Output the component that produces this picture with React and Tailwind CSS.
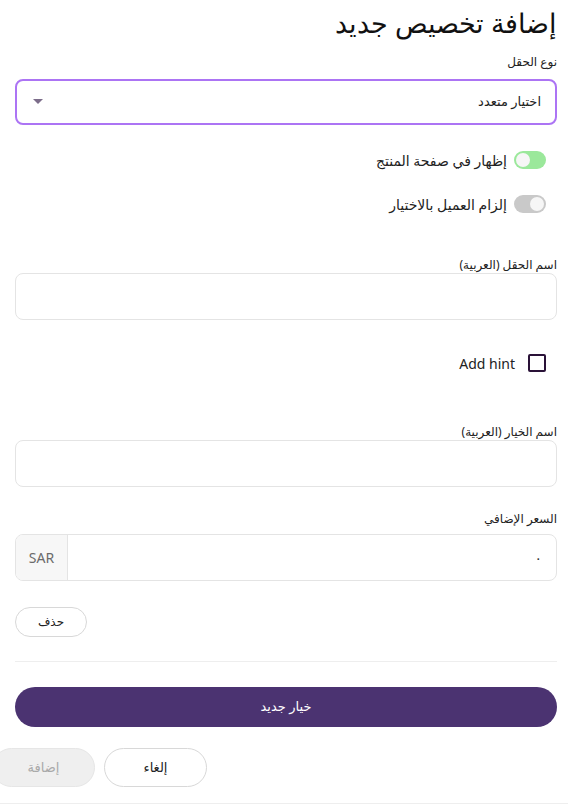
import React from "react";

const font = { fontFamily: '"Noto Sans", "DejaVu Sans", sans-serif' };

function Toggle({ on }) {
  return (
    <div
      className={`w-[32px] h-[18px] rounded-full flex items-center px-[2px] ${
        on ? "bg-[#9be89b] justify-end" : "bg-[#c9c9c9] justify-start"
      }`}
    >
      <div className="w-[14px] h-[14px] rounded-full bg-[#f6f6f6]" />
    </div>
  );
}

export default function App() {
  return (
    <div dir="rtl" className="w-[568px] h-[805px] bg-white overflow-hidden text-[#222]" style={font}>
      <div className="pl-[15px] pr-[11px] flex flex-col">
        <div className="h-[50px] pb-[4px] flex items-center text-[27px] font-light text-[#111]">إضافة تخصيص جديد</div>
        <div className="h-[24px] flex items-center text-[12px] text-[#222]">نوع الحقل</div>
        <div className="mt-[5px] h-[46px] border-2 border-[#ac74f4] rounded-[8px] flex items-center justify-between pr-[14px] pl-[16px]">
          <span className="text-[13px] text-[#222]">اختيار متعدد</span>
          <svg width="10" height="6" viewBox="0 0 10 6">
            <path d="M0 0 L10 0 L5 5 Z" fill="#7c6d8a" />
          </svg>
        </div>
        <div className="mt-[23px] h-[24px] flex items-center gap-[7px] pr-[11px]">
          <Toggle on />
          <span className="text-[14px] text-[#222]">إظهار في صفحة المنتج</span>
        </div>
        <div className="mt-[20px] h-[24px] flex items-center gap-[7px] pr-[11px]">
          <Toggle on={false} />
          <span className="text-[14px] text-[#222]">إلزام العميل بالاختيار</span>
        </div>
        <div className="mt-[41px] h-[16px] flex items-center text-[12px] text-[#222]">اسم الحقل (العربية)</div>
        <div className="h-[47px] border border-[#e4e4e4] rounded-[8px]" />
        <div className="mt-[31px] h-[24px] flex items-center gap-[13px] pr-[11px]">
          <div className="w-[18px] h-[18px] border-2 border-[#2a1238] rounded-[2px]" />
          <span dir="ltr" className="text-[14px] text-[#222]">Add hint</span>
        </div>
        <div className="mt-[49px] h-[16px] flex items-center text-[12px] text-[#222]">اسم الخيار (العربية)</div>
        <div className="h-[47px] border border-[#e4e4e4] rounded-[8px]" />
        <div className="mt-[24px] h-[16px] flex items-center text-[12px] text-[#222]">السعر الإضافي</div>
        <div className="mt-[7px] h-[47px] border border-[#e4e4e4] rounded-[8px] flex overflow-hidden">
          <div className="flex-1 flex items-center pr-[14px] text-[14px] text-[#333]">٠</div>
          <div className="w-[52px] bg-[#f7f7f7] border-r border-[#e4e4e4] flex items-center justify-center text-[14px] text-[#6b6b6b]">
            SAR
          </div>
        </div>
        <div className="mt-[26px] flex justify-end">
          <button className="w-[72px] h-[30px] rounded-full border border-[#d8d8d8] bg-white text-[12px] text-[#222]" style={font}>
            حذف
          </button>
        </div>
        <div className="mt-[24px] border-t border-[#eeeeee]" />
        <button className="mt-[25px] h-[40px] rounded-full bg-[#4b3371] text-white text-[13px]" style={font}>
          خيار جديد
        </button>
        <div className="mt-[21px] flex justify-end gap-[9px] ml-[-23px]">
          <button className="w-[103px] h-[39px] rounded-full border border-[#d8d8d8] bg-white text-[13px] text-[#222]" style={font}>
            إلغاء
          </button>
          <button className="w-[103px] h-[39px] rounded-full border border-[#e6e6e6] bg-[#efefef] text-[13px] text-[#a9a9a9]" style={font}>
            إضافة
          </button>
        </div>
      </div>
      <div className="mt-[16px] border-t border-[#eeeeee]" />
    </div>
  );
}
